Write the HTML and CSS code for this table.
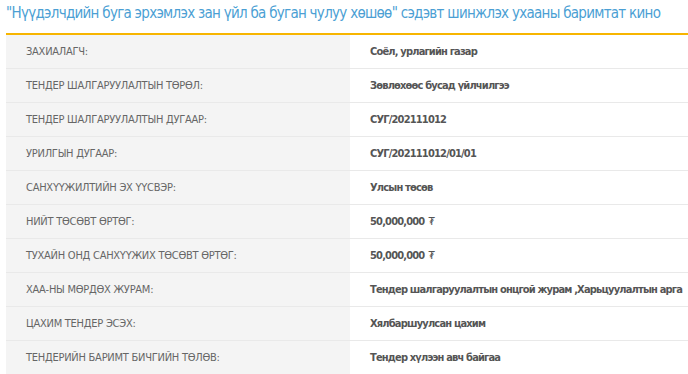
FILE: index.html
```html
<!DOCTYPE html>
<html lang="mn">
<head>
<meta charset="utf-8">
<link rel="stylesheet" href="styles.css">
</head>
<body>
<div class="wrap">
  <h1 class="title">"Нүүдэлчдийн буга эрхэмлэх зан үйл ба буган чулуу хөшөө" сэдэвт шинжлэх ухааны баримтат кино</h1>
  <div class="table">
    <div class="row"><div class="label">ЗАХИАЛАГЧ:</div><div class="value">Соёл, урлагийн газар</div></div>
    <div class="row"><div class="label">ТЕНДЕР ШАЛГАРУУЛАЛТЫН ТӨРӨЛ:</div><div class="value">Зөвлөхөөс бусад үйлчилгээ</div></div>
    <div class="row"><div class="label">ТЕНДЕР ШАЛГАРУУЛАЛТЫН ДУГААР:</div><div class="value">СУГ/202111012</div></div>
    <div class="row"><div class="label">УРИЛГЫН ДУГААР:</div><div class="value">СУГ/202111012/01/01</div></div>
    <div class="row"><div class="label">САНХҮҮЖИЛТИЙН ЭХ ҮҮСВЭР:</div><div class="value">Улсын төсөв</div></div>
    <div class="row"><div class="label">НИЙТ ТӨСӨВТ ӨРТӨГ:</div><div class="value">50,000,000 <span class="cur">₮</span></div></div>
    <div class="row"><div class="label">ТУХАЙН ОНД САНХҮҮЖИХ ТӨСӨВТ ӨРТӨГ:</div><div class="value">50,000,000 <span class="cur">₮</span></div></div>
    <div class="row"><div class="label">ХАА-НЫ МӨРДӨХ ЖУРАМ:</div><div class="value">Тендер шалгаруулалтын онцгой журам ,Харьцуулалтын арга</div></div>
    <div class="row"><div class="label">ЦАХИМ ТЕНДЕР ЭСЭХ:</div><div class="value">Хялбаршуулсан цахим</div></div>
    <div class="row"><div class="label">ТЕНДЕРИЙН БАРИМТ БИЧГИЙН ТӨЛӨВ:</div><div class="value">Тендер хүлээн авч байгаа</div></div>
  </div>
</div>
</body>
</html>
```

FILE: styles.css
```css
html, body {
  margin: 0;
  padding: 0;
  background: #fff;
}
body {
  font-family: "DejaVu Sans Condensed", "DejaVu Sans", sans-serif;
  font-stretch: condensed;
}
.wrap {
  padding: 0 0 0 6px;
}
.title {
  margin: 0;
  box-sizing: border-box;
  height: 35px;
  padding-top: 4px;
  font-size: 15px;
  letter-spacing: -0.72px;
  font-weight: normal;
  color: #4b9fd4;
  white-space: nowrap;
  border-bottom: 2px solid #f7b500;
}
.table {
  display: flex;
  flex-direction: column;
}
.row {
  display: grid;
  grid-template-columns: 344px 1fr;
  height: 34px;
  border-top: 1px solid #e9e9e9;
  box-sizing: border-box;
}
.row:first-child {
  border-top: none;
  height: 33px;
}
.label {
  background: #f4f4f4;
  padding-left: 20px;
  display: flex;
  align-items: center;
  font-size: 11px;
  letter-spacing: -0.25px;
  color: #666;
}
.value {
  padding-left: 20px;
  display: flex;
  align-items: center;
  font-size: 11px;
  letter-spacing: -0.82px;
  font-weight: bold;
  color: #555;
  white-space: nowrap;
}
.cur {
  font-weight: normal;
  margin-left: 4px;
}
```
